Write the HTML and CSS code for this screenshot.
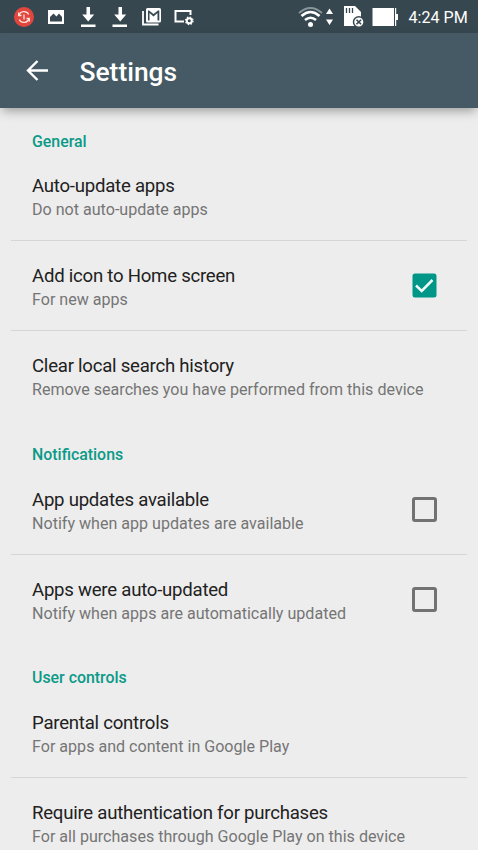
FILE: index.html
```html
<!DOCTYPE html>
<html lang="en">
<head>
<meta charset="utf-8">
<title>Settings</title>
<link rel="stylesheet" href="styles.css">
</head>
<body>
<div class="status">
  <svg class="status-left" width="200" height="33" viewBox="0 0 200 33" fill="none">
    <circle cx="24" cy="17" r="10" fill="#e2463c"/>
    <g stroke="#fbe3df" stroke-width="1.400">
      <path d="M19 15.500A5.200 5.200 0 0 1 28.700 14.500M29 18.500A5.200 5.200 0 0 1 19.300 19.500"/>
      <path d="M18.700 12.500V15.500H21.500M29.300 21.500V18.500H26.500"/>
      <path d="M24 14.500V19.500" stroke-width="1.300"/>
    </g>
    <path fill="#fff" fill-rule="evenodd" d="M48 10H64V24H48ZM50 21.500H62V17L59 13.500L56.500 16.500L53.500 13.500L50 17Z"/>
    <g fill="#fff">
      <path d="M86.500 7H90V14.500H94.200L88.200 21.500L82.200 14.500H86.500ZM81 24.500H95.500V27H81Z"/>
      <path d="M118.500 7H122V14.500H126.200L120.200 21.500L114.200 14.500H118.500ZM112.500 24.500H127V27H112.500Z"/>
      <path fill-rule="evenodd" d="M147.500 8H159.500Q161 8 161 9.500V21Q161 22.500 159.500 22.500H147.500Q146 22.500 146 21V9.500Q146 8 147.500 8ZM148 20.500H149.500V13L153.500 16.500L157.500 13V20.500H159.300V10.500H158L153.500 14L149 10.500H148Z"/>
    </g>
    <path stroke="#fff" stroke-width="1.800" d="M143 11V24.500H158.500"/>
    <path stroke="#fff" stroke-width="2" d="M184 21.500H175.500V11H190.500V15"/>
    <circle cx="189.300" cy="20.800" r="2.500" stroke="#fff" stroke-width="2"/>
    <circle cx="189.300" cy="20.800" r="3.800" stroke="#fff" stroke-width="1.200" stroke-dasharray="1.500 1.485"/>
  </svg>
  <svg width="110" height="33" viewBox="290 0 110 33" fill="none">
    <path stroke="#87949a" stroke-width="2" d="M299 13Q310.500 3 322 13"/>
    <path stroke="#fff" stroke-width="2.600" d="M301.500 16Q310.500 8 319.500 16M305 20Q310.500 15.500 316 20"/>
    <circle cx="310.500" cy="24.500" r="2.500" fill="#fff"/>
    <path fill="#fff" d="M326 14L329.500 8.500L333 14ZM326 19.500H333L329.500 25Z"/>
    <path fill="#fff" d="M344 6H355L361 12V26H344Z"/>
    <path stroke="#37474f" stroke-width="1.300" d="M346.500 8V13M349.500 8V13M352.500 8V13"/>
    <circle cx="358.800" cy="22" r="5.300" fill="#fff" stroke="#37474f" stroke-width="1.500"/>
    <path stroke="#37474f" stroke-width="1.600" d="M356.500 19.700L361.100 24.300M361.100 19.700L356.500 24.300"/>
    <path fill="#fff" d="M372.500 8H394V26H372.500ZM395 8H396.200V14H398V20H396.200V26H395Z"/>
  </svg>
  <span class="clock">4:24 PM</span>
</div>
<header class="appbar">
  <svg class="back" width="24" height="24" viewBox="0 0 24 24" fill="none" stroke="#fff" stroke-width="2.400"><path d="M12.500 3L3 12.500L12.500 22M3.500 12.500H23"/></svg>
  <h1>Settings</h1>
</header>
<main>
  <h2>General</h2>
  <section class="row line"><div><h3>Auto-update apps</h3><p>Do not auto-update apps</p></div></section>
  <section class="row line"><div><h3>Add icon to Home screen</h3><p>For new apps</p></div>
    <svg class="check" width="25" height="25" viewBox="0 0 25 25"><rect x=".5" y=".5" width="24" height="24" rx="2.500" fill="#009688"/><path d="M4 12.500L9.700 18L20.500 7" fill="none" stroke="#f2f8f7" stroke-width="2.500"/></svg></section>
  <section class="row"><div><h3>Clear local search history</h3><p>Remove searches you have performed from this device</p></div></section>
  <h2>Notifications</h2>
  <section class="row line"><div><h3>App updates available</h3><p>Notify when app updates are available</p></div><span class="check box"></span></section>
  <section class="row"><div><h3>Apps were auto-updated</h3><p>Notify when apps are automatically updated</p></div><span class="check box"></span></section>
  <h2>User controls</h2>
  <section class="row line"><div><h3>Parental controls</h3><p>For apps and content in Google Play</p></div></section>
  <section class="row"><div><h3>Require authentication for purchases</h3><p>For all purchases through Google Play on this device</p></div></section>
</main>
</body>
</html>
```
FILE: styles.css
```css
* { box-sizing: border-box; margin: 0; padding: 0; }
body {
  height: 850px;
  overflow: hidden;
  display: flex;
  flex-direction: column;
  background: #ededed;
  font-family: Roboto, sans-serif;
}
svg { display: block; flex: none; }
.status {
  height: 33px;
  flex: none;
  display: flex;
  background: #37474f;
  color: #fff;
}
.status-left { margin-right: 90px; }
.clock { margin-left: 8.500px; font-size: 16.100px; line-height: 36px; white-space: nowrap; }
.appbar {
  height: 74.500px;
  flex: none;
  display: flex;
  align-items: center;
  padding-left: 25px;
  background: #455a64;
  color: #fff;
  box-shadow: 0 5px 10px -2px rgba(0, 0, 0, .34);
}
h1 { margin: 3px 0 0 30.500px; font-size: 26.400px; font-weight: 500; line-height: 74px; }
main { flex: none; }
h2 {
  height: 43.750px;
  padding: 24px 32px 0;
  font-size: 15.900px;
  font-weight: 500;
  line-height: 20px;
  color: #0b9a88;
}
.row {
  height: 89.900px;
  margin: 0 11px;
  padding: 23px 30px 0 21px;
  display: flex;
  justify-content: space-between;
  white-space: nowrap;
}
.line { border-bottom: 1.500px solid #d5d5d5; }
h3 { font-size: 18.600px; font-weight: 400; line-height: 24px; letter-spacing: -.24px; color: #212121; }
p { margin-top: 1px; font-size: 16.080px; line-height: 22px; color: #757575; }
.check { margin-top: 9px; }
.box { width: 25px; height: 25px; flex: none; border: 3px solid #727272; border-radius: 3px; }
```
